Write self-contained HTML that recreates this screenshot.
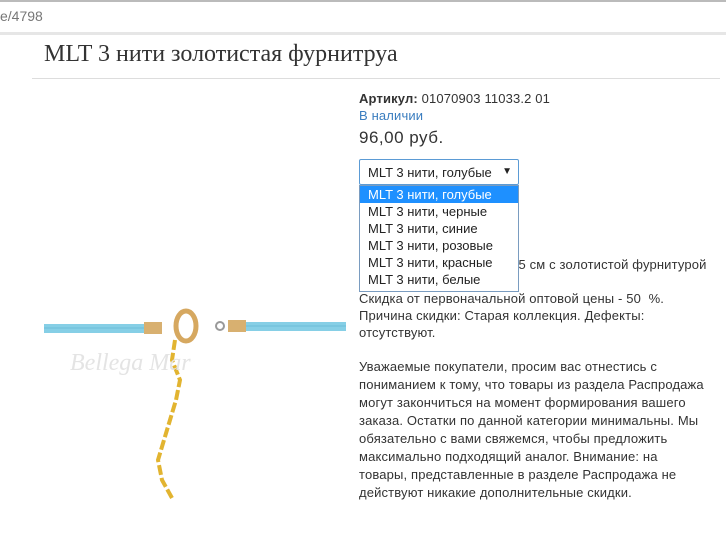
<!DOCTYPE html>
<html><head><meta charset="utf-8"><style>
body{margin:0;width:726px;height:558px;background:#fff;position:relative;overflow:hidden;font-family:"Liberation Sans","DejaVu Sans",sans-serif;color:#333}
.abs{position:absolute;white-space:nowrap}
.url{top:0;left:0;width:726px;height:30px;border-top:2px solid #bbb;border-bottom:2px solid #ccc;background:#fff}
.url span{position:absolute;left:0;top:6px;font-size:14px;color:#777}
.bar2{top:32px;left:0;width:726px;height:3px;background:#e6e6e6}
h1{position:absolute;left:44px;top:41px;margin:0;font:normal 24px "Liberation Serif",serif;color:#333}
.hr{top:78px;left:32px;width:688px;height:1px;background:#ddd}
.t{font-size:13px;letter-spacing:.15px;color:#333}
.sel{left:359px;top:159px;width:158px;height:24px;border:1px solid #5b9bd5;border-radius:2px;background:#fff;font-size:13px;color:#222}
.sel span{position:absolute;left:8px;top:5px}
.sel b{position:absolute;right:6px;top:6px;font-size:10px}
.dd{left:359px;top:185px;width:158px;height:105px;border:1px solid #7a9cc0;background:#fff;font-size:13px;color:#222}
.dd div{height:17px;line-height:17px;padding-left:8px}
.dd .on{background:#1e90ff;color:#fff}
</style></head><body>
<div class="abs url"><span>e/4798</span></div>
<div class="abs bar2"></div>
<h1>MLT 3 нити золотистая фурнитруа</h1>
<div class="abs hr"></div>

<svg class="abs" style="left:40px;top:300px" width="310" height="200" viewBox="0 0 310 200">
<rect x="4" y="24" width="100" height="9" fill="#86cfe6"/>
<rect x="206" y="22" width="100" height="9" fill="#86cfe6"/>
<line x1="4" y1="28" x2="104" y2="28" stroke="#6cbcd8" stroke-width="1"/>
<line x1="206" y1="26" x2="306" y2="26" stroke="#6cbcd8" stroke-width="1"/>
<rect x="104" y="22" width="18" height="12" fill="#d8b070"/>
<rect x="188" y="20" width="18" height="12" fill="#d8b070"/>
<ellipse cx="146" cy="26" rx="10" ry="15" fill="none" stroke="#d6a860" stroke-width="5"/>
<circle cx="180" cy="26" r="4" fill="none" stroke="#999" stroke-width="2"/>
<path d="M135 40 L132 60 L140 80 L136 100 L130 120 L124 140 L118 160 L122 180 L132 198" fill="none" stroke="#e2b430" stroke-width="4" stroke-dasharray="10 3"/>
<text x="30" y="70" font-family="Liberation Serif" font-style="italic" font-size="24" fill="#e4e4e4">Bellega Mar</text>
</svg>

<div class="abs t" style="left:359px;top:91px"><b>Артикул:</b> 01070903 11033.2 01</div>
<div class="abs t" style="left:359px;top:108px;color:#3a7dbf">В наличии</div>
<div class="abs" style="left:359px;top:128px;font-size:17px;letter-spacing:.5px">96,00 руб.</div>

<div class="abs t" style="left:514px;top:257px">-5 см с золотистой фурнитурой</div>
<div class="abs t" style="left:359px;top:290px;line-height:17px">Скидка от первоначальной оптовой цены - 50 &nbsp;%.<br>Причина скидки: Старая коллекция. Дефекты:<br>отсутствуют.</div>
<div class="abs t" style="left:359px;top:358px;line-height:18px">Уважаемые покупатели, просим вас отнестись с<br>пониманием к тому, что товары из раздела Распродажа<br>могут закончиться на момент формирования вашего<br>заказа. Остатки по данной категории минимальны. Мы<br>обязательно с вами свяжемся, чтобы предложить<br>максимально подходящий аналог. Внимание: на<br>товары, представленные в разделе Распродажа не<br>действуют никакие дополнительные скидки.</div>

<div class="abs sel"><span>MLT 3 нити, голубые</span><b>▼</b></div>
<div class="abs dd">
<div class="on">MLT 3 нити, голубые</div>
<div>MLT 3 нити, черные</div>
<div>MLT 3 нити, синие</div>
<div>MLT 3 нити, розовые</div>
<div>MLT 3 нити, красные</div>
<div>MLT 3 нити, белые</div>
</div>
</body></html>
